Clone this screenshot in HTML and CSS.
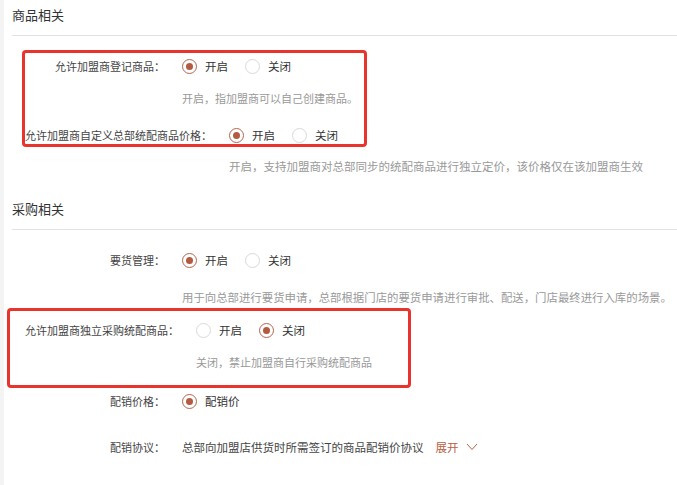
FILE: index.html
```html
<!DOCTYPE html>
<html lang="zh">
<head>
<meta charset="utf-8">
<link rel="stylesheet" href="styles.css">
</head>
<body>
<div class="page">
  <section class="section">
    <h2 class="section-title">商品相关</h2>
    <div class="divider"></div>
    <div class="row row-first">
      <div class="label">允许加盟商登记商品：</div>
      <div class="content">
        <div class="radios">
          <span class="radio checked"><i class="dot"></i>开启</span>
          <span class="radio"><i class="dot"></i>关闭</span>
        </div>
        <div class="desc">开启，指加盟商可以自己创建商品。</div>
      </div>
    </div>
    <div class="row row-gap17">
      <div class="label">允许加盟商自定义总部统配商品价格：</div>
      <div class="content">
        <div class="radios">
          <span class="radio checked"><i class="dot"></i>开启</span>
          <span class="radio"><i class="dot"></i>关闭</span>
        </div>
        <div class="desc desc-11">开启，支持加盟商对总部同步的统配商品进行独立定价，该价格仅在该加盟商生效</div>
      </div>
    </div>
  </section>

  <section class="section section-second">
    <h2 class="section-title">采购相关</h2>
    <div class="divider"></div>
    <div class="row row-first">
      <div class="label">要货管理：</div>
      <div class="content">
        <div class="radios">
          <span class="radio checked"><i class="dot"></i>开启</span>
          <span class="radio"><i class="dot"></i>关闭</span>
        </div>
        <div class="desc desc-17">用于向总部进行要货申请，总部根据门店的要货申请进行审批、配送，门店最终进行入库的场景。</div>
      </div>
    </div>
    <div class="row row-gap13">
      <div class="label">允许加盟商独立采购统配商品：</div>
      <div class="content">
        <div class="radios">
          <span class="radio"><i class="dot"></i>开启</span>
          <span class="radio checked"><i class="dot"></i>关闭</span>
        </div>
        <div class="desc">关闭，禁止加盟商自行采购统配商品</div>
      </div>
    </div>
    <div class="row row-gap19">
      <div class="label">配销价格：</div>
      <div class="content">
        <div class="radios">
          <span class="radio checked"><i class="dot"></i>配销价</span>
        </div>
      </div>
    </div>
    <div class="row row-gap26">
      <div class="label">配销协议：</div>
      <div class="content">
        <div class="agreement">
          <span class="agreement-text">总部向加盟店供货时所需签订的商品配销价协议</span>
          <span class="expand">展开
            <svg class="chev" width="12" height="8" viewBox="0 0 12 8"><polyline points="1,1 6,6.5 11,1" fill="none" stroke="currentColor" stroke-width="1"/></svg>
          </span>
        </div>
      </div>
    </div>
  </section>

  <div class="highlight highlight-one"></div>
  <div class="highlight highlight-two"></div>
</div>
</body>
</html>
```

FILE: styles.css
```css
* { box-sizing: border-box; }
html, body {
  margin: 0;
  padding: 0;
  background: #fff;
}
body {
  font-family: "Noto Sans CJK SC", "Noto Sans", sans-serif;
  color: #333;
  width: 677px;
  height: 485px;
  overflow: hidden;
}
.page {
  position: relative;
  height: 485px;
  border-left: 4px solid #f4f4f4;
  padding-top: 5px;
}
.section-title {
  margin: 0 0 0 8px;
  font-size: 13px;
  font-weight: normal;
  line-height: 20px;
  color: #333;
}
.divider {
  margin: 10px 0 0 8px;
  height: 1px;
  background: #e2e2e2;
}
.section-second { margin-top: 23px; }
.row {
  display: flex;
  align-items: flex-start;
  padding-left: 21px;
  font-size: 11px;
  line-height: 20px;
}
.row-first { margin-top: 20px; }
.row-gap17 { margin-top: 17px; }
.row-gap13 { margin-top: 13px; }
.row-gap19 { margin-top: 19px; }
.row-gap26 { margin-top: 26px; }
.label {
  min-width: 140px;
  text-align: right;
  color: #444;
  margin-right: 17px;
  white-space: nowrap;
}
.content { display: flex; flex-direction: column; }
.radios { display: flex; gap: 17px; }
.radio {
  display: inline-flex;
  align-items: center;
  gap: 8px;
  font-size: 11.5px;
  color: #333;
}
.dot {
  width: 15px;
  height: 15px;
  border: 1px solid #d9d9d9;
  border-radius: 50%;
  display: inline-block;
  position: relative;
  background: #fff;
}
.radio.checked .dot { border-color: #b8644d; }
.radio.checked .dot::after {
  content: "";
  position: absolute;
  left: 3px;
  top: 3px;
  width: 7px;
  height: 7px;
  border-radius: 50%;
  background: #b35a40;
}
.desc {
  margin-top: 12px;
  color: #999;
  font-size: 11px;
  white-space: nowrap;
}
.desc-11 { margin-top: 11px; font-size: 11.5px; }
.desc-17 { margin-top: 17px; font-size: 11.4px; }
.agreement { display: flex; align-items: center; }
.agreement-text { color: #444; font-size: 11.5px; }
.expand {
  margin-left: 12px;
  color: #b8603f;
  font-size: 11.5px;
  display: inline-flex;
  align-items: center;
  gap: 7px;
}
.chev { display: block; }
.highlight {
  position: absolute;
  border: 3px solid #e8342c;
  border-radius: 4px;
  pointer-events: none;
}
.highlight-one { left: 18px; top: 50px; width: 345px; height: 97px; }
.highlight-two { left: 3px; top: 308px; width: 404px; height: 80px; }
```
